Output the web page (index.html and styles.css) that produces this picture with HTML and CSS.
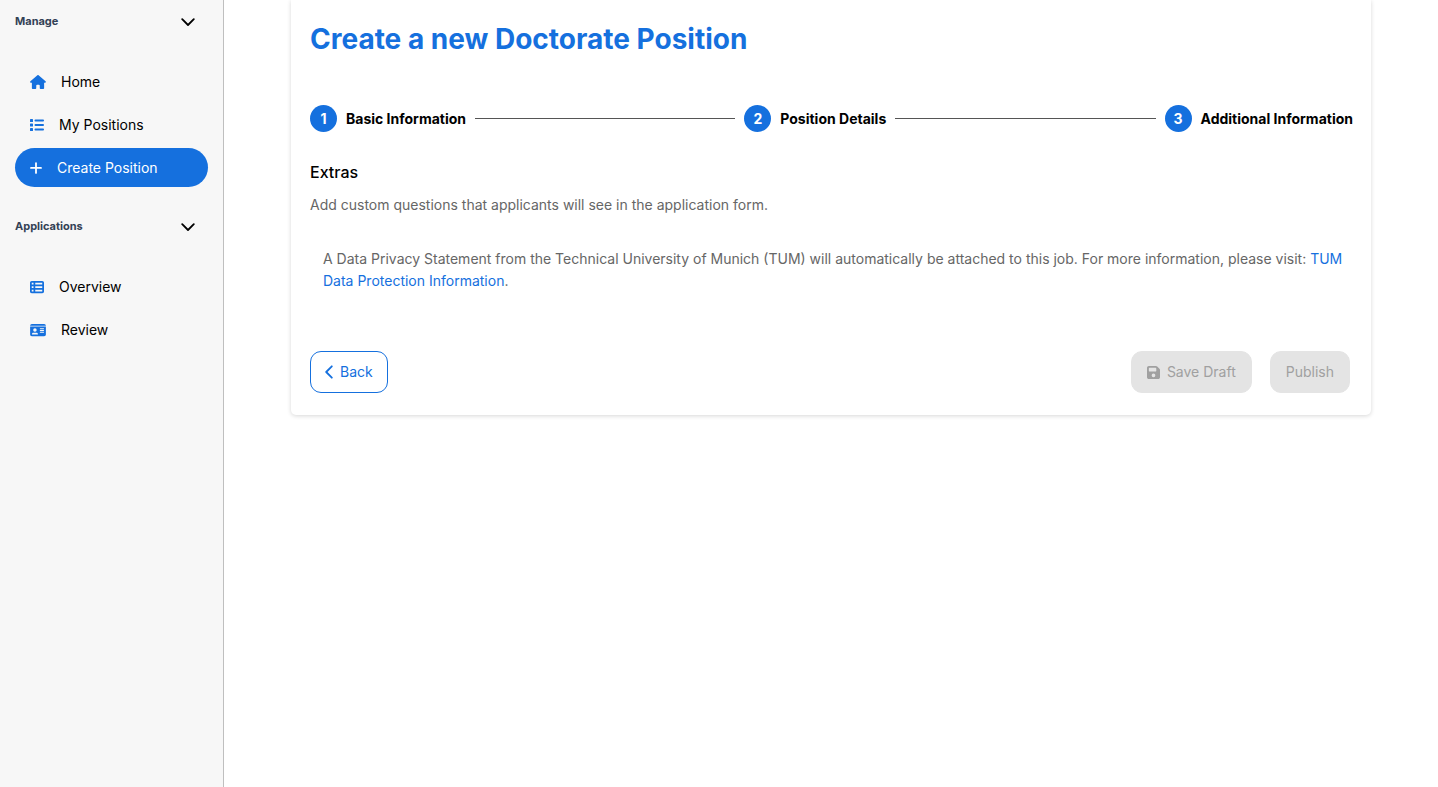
FILE: index.html
```html
<!DOCTYPE html>
<html lang="en">
<head>
<meta charset="utf-8">
<meta name="viewport" content="width=device-width, initial-scale=1">
<title>Create a new Doctorate Position</title>
<link rel="stylesheet" href="styles.css">
</head>
<body>
<div class="layout">
  <nav class="sidebar" aria-label="Main">
    <section class="group">
      <button class="group-toggle" type="button" aria-expanded="true">
        <span>Manage</span>
        <svg class="chevron" viewBox="0 0 14 14" aria-hidden="true"><path d="M1.200 4.200 7 10l5.800-5.800"/></svg>
      </button>
      <ul class="menu">
        <li><a class="item" href="#home">
          <svg class="icon" width="16" height="14" viewBox="0 0 576 512" aria-hidden="true"><path d="M575.8 255.5c0 18-15 32.100-32 32.100l-32 0 .7 160.200c0 2.700-.2 5.400-.5 8.100l0 16.200c0 22.100-17.900 40-40 40l-80 0c-22.100 0-40-17.900-40-40l0-88c0-17.700-14.300-32-32-32l-64 0c-17.700 0-32 14.300-32 32l0 88c0 22.100-17.900 40-40 40l-80 0c-22.100 0-40-17.900-40-40l0-184.500-32 0c-18 0-32-14-32-32.100 0-9 3-17 10-24L266.400 8c7-7 15-8 22-8s15 2 21 7L564.800 231.500c8 7 12 15 11 24z"/></svg>
          Home</a></li>
        <li><a class="item" href="#positions">
          <svg class="icon" width="14" height="14" viewBox="0 0 14 14" aria-hidden="true"><rect x="0" y="1" width="3" height="3" rx=".6"/><rect x="0" y="5.500" width="3" height="3" rx=".6"/><rect x="0" y="10" width="3" height="3" rx=".6"/><rect x="4.500" y="1.600" width="9.500" height="1.800" rx=".9"/><rect x="4.500" y="6.100" width="9.500" height="1.800" rx=".9"/><rect x="4.500" y="10.600" width="9.500" height="1.800" rx=".9"/></svg>
          My Positions</a></li>
        <li><a class="item item-active" href="#create" aria-current="page">
          <svg class="icon" width="12" height="14" viewBox="0 0 12 14" aria-hidden="true"><path d="M6 1.200a.9.900 0 0 1 .9.900V6h4.100a.9.900 0 0 1 0 1.800H6.900v4.100a.9.900 0 0 1-1.800 0V7.800H1A.9.900 0 0 1 1 6h4.100V2.100a.9.900 0 0 1 .9-.9z"/></svg>
          Create Position</a></li>
      </ul>
    </section>
    <section class="group">
      <button class="group-toggle" type="button" aria-expanded="true">
        <span>Applications</span>
        <svg class="chevron" viewBox="0 0 14 14" aria-hidden="true"><path d="M1.200 4.200 7 10l5.800-5.800"/></svg>
      </button>
      <ul class="menu">
        <li><a class="item" href="#overview">
          <svg class="icon" width="14" height="14" viewBox="0 0 512 512" aria-hidden="true"><path fill-rule="evenodd" d="M0 96c0-35.300 28.700-64 64-64h384c35.300 0 64 28.700 64 64v320c0 35.300-28.700 64-64 64H64c-35.300 0-64-28.700-64-64V96zm64 0v64h64V96H64zm384 0H192v64h256V96zM64 224v64h64v-64H64zm384 0H192v64h256v-64zM64 352v64h64v-64H64zm384 0H192v64h256v-64z"/></svg>
          Overview</a></li>
        <li><a class="item" href="#review">
          <svg class="icon" width="16" height="14" viewBox="0 0 576 512" aria-hidden="true"><path fill-rule="evenodd" d="M0 96h576c0-35.300-28.700-64-64-64H64C28.700 32 0 60.700 0 96zm0 32v288c0 35.300 28.700 64 64 64h448c35.300 0 64-28.700 64-64V128H0zm64 277.300c0-29.400 23.900-53.300 53.300-53.300h117.400c29.400 0 53.300 23.900 53.300 53.300 0 5.900-4.800 10.700-10.700 10.700H74.700c-5.900 0-10.700-4.800-10.700-10.700zM176 192a64 64 0 1 1 0 128 64 64 0 1 1 0-128zm176 16c0-8.800 7.200-16 16-16h128a16 16 0 0 1 0 32H368c-8.800 0-16-7.200-16-16zm0 64c0-8.800 7.200-16 16-16h128a16 16 0 0 1 0 32H368c-8.800 0-16-7.200-16-16zm0 64c0-8.800 7.200-16 16-16h128a16 16 0 0 1 0 32H368c-8.800 0-16-7.200-16-16z"/></svg>
          Review</a></li>
      </ul>
    </section>
  </nav>

  <main class="content">
    <div class="card">
      <h1 class="title">Create a new Doctorate Position</h1>
      <ol class="stepper">
        <li class="step"><span class="step-number">1</span><span class="step-label">Basic Information</span></li>
        <li class="step"><span class="step-number">2</span><span class="step-label">Position Details</span></li>
        <li class="step"><span class="step-number">3</span><span class="step-label">Additional Information</span></li>
      </ol>
      <h2 class="section-title">Extras</h2>
      <p class="hint">Add custom questions that applicants will see in the application form.</p>
      <p class="privacy">A Data Privacy Statement from the Technical University of Munich (TUM) will automatically be attached to this job. For more information, please visit: <a href="#privacy">TUM Data Protection Information</a>.</p>
      <div class="actions">
        <button class="button button-outline" type="button">
          <svg class="back-icon" viewBox="0 0 8 14" aria-hidden="true"><path d="M6.800 1.300 1.200 7l5.600 5.700"/></svg>
          Back</button>
        <div class="actions-end">
          <button class="button" type="button" disabled>
            <svg class="icon" width="13" height="15" viewBox="0 0 448 512" aria-hidden="true"><path fill-rule="evenodd" d="M64 32C28.700 32 0 60.700 0 96v320c0 35.300 28.700 64 64 64h320c35.300 0 64-28.700 64-64V173.300c0-17-6.700-33.300-18.700-45.300L352 50.700C340 38.700 323.700 32 306.700 32H64zm0 96c0-17.700 14.300-32 32-32h192c17.700 0 32 14.300 32 32v64c0 17.700-14.300 32-32 32H96c-17.700 0-32-14.300-32-32v-64zm160 160a64 64 0 1 1 0 128 64 64 0 1 1 0-128z"/></svg>
            Save Draft</button>
          <button class="button" type="button" disabled>Publish</button>
        </div>
      </div>
    </div>
  </main>
</div>
</body>
</html>
```

FILE: styles.css
```css
*, *::before, *::after { box-sizing: border-box; }

body {
  margin: 0;
  font-family: Inter, "Liberation Sans", sans-serif;
  font-size: 14px;
  line-height: 22px;
  color: #000;
  background: #fff;
}

button { font: inherit; }

.layout { display: flex; min-height: 100vh; }

/* Sidebar */
.sidebar {
  flex: 0 0 224px;
  padding: 13px 15px;
  background: #f7f7f7;
  border-right: 1px solid #bfbfbf;
}

.group + .group { margin-top: 31px; }

.group-toggle {
  display: flex;
  align-items: center;
  justify-content: space-between;
  width: 100%;
  padding: 0 13px 0 0;
  border: 0;
  background: none;
  color: #334155;
  font-size: 11px;
  font-weight: 700;
  line-height: 17px;
}

.chevron {
  width: 14px;
  height: 14px;
  fill: none;
  stroke: #000;
  stroke-width: 1.8;
  stroke-linecap: round;
  stroke-linejoin: round;
}

.menu {
  display: grid;
  gap: 4px;
  margin: 32px 0 0;
  padding: 0;
  list-style: none;
}

.item {
  display: flex;
  align-items: center;
  gap: 15px;
  height: 39px;
  padding: 0 15px;
  border-radius: 20px;
  color: #000;
  text-decoration: none;
}

.icon { flex: none; fill: #1570de; }
.item-active { background: #1570de; color: #fff; }
.item-active .icon { fill: #fff; }

/* Form card */
.content { flex: 1; min-width: 0; padding: 0 67px; }

.card {
  max-width: 1080px;
  margin: 0 auto;
  padding: 18px 18px 22px 19px;
  border-radius: 0 0 5px 5px;
  box-shadow: 0 1px 4px rgba(0, 0, 0, .16);
}

.title {
  margin: 0;
  color: #1570de;
  font-size: 28px;
  font-weight: 700;
  line-height: 42px;
}

.stepper {
  display: flex;
  align-items: center;
  gap: 9px;
  margin: 45px 0 0;
  padding: 0;
  list-style: none;
  font-weight: 700;
}

.step { display: flex; align-items: center; gap: 9px; white-space: nowrap; }
.step:not(:last-child) { flex: 1 1 auto; }
.step:not(:last-child)::after { content: ""; flex: 1; height: 1px; background: #555; }

.step-number {
  flex: none;
  width: 27px;
  border-radius: 50%;
  background: #1570de;
  color: #fff;
  line-height: 27px;
  text-align: center;
}

.section-title { margin: 27px 0 0; font-size: 16px; font-weight: 500; line-height: 26px; }
.hint { margin: 9px 0 0; color: #666; }
.privacy { margin: 32px 0 0 13px; color: #666; }
.privacy a { color: #1570de; text-decoration: none; }

.actions { display: flex; justify-content: space-between; margin: 59px 3px 0 0; }
.actions-end { display: flex; gap: 18px; }

.button {
  display: flex;
  align-items: center;
  justify-content: center;
  gap: 7px;
  height: 42px;
  padding: 0 15px;
  border: 1px solid #e4e4e4;
  border-radius: 11px;
  background: #e4e4e4;
  color: #a0a0a0;
}

.button .icon { fill: #a0a0a0; }
.button-outline { padding: 0 14px; border-color: #1570de; background: #fff; color: #1570de; }

.back-icon {
  width: 8px;
  height: 14px;
  fill: none;
  stroke: #1570de;
  stroke-width: 1.8;
  stroke-linecap: round;
  stroke-linejoin: round;
}
```
